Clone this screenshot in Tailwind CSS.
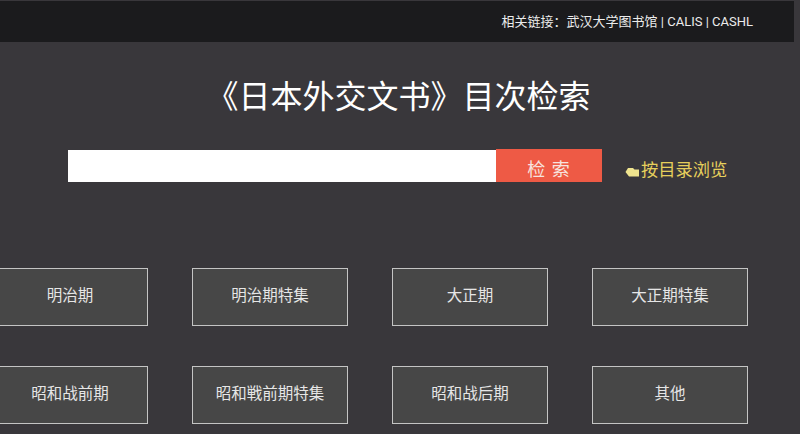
<!DOCTYPE html>
<html lang="zh-CN">
<head>
    <meta charset="UTF-8">
    <meta name="viewport" content="width=device-width, initial-scale=1.0">
    <title>《日本外交文书》目次检索</title>
    <script src="https://cdn.jsdelivr.net/npm/@tailwindcss/browser@4"></script>
</head>
<body class="bg-[#39373b] h-[434px] overflow-hidden font-['Roboto','Noto_Sans_CJK_SC',sans-serif]">

    <div class="w-[794px] h-[41px] mt-px bg-[#1b1b1d] flex items-center justify-end pr-[41px] text-[13px] text-[#ececec]">
        <span>相关链接：<a href="#">武汉大学图书馆</a> | <a href="#">CALIS</a> | <a href="#">CASHL</a></span>
    </div>

    <h1 class="mt-[33px] pr-[3px] text-center text-[32px] leading-[44px] font-normal text-white">《日本外交文书》目次检索</h1>

    <div class="mt-[30px] ml-[68px] flex items-center">
        <input type="text" class="w-[428px] h-[32px] bg-white border-0 outline-none">
        <button class="w-[106px] h-[33px] pt-2 bg-[#ee5a45] text-[18px] tracking-[1px] leading-none text-[#f7e3df]">检 索</button>
        <a href="#" class="ml-[23px] mt-[11px] flex items-center text-[17.25px] leading-none text-[#e6cf5c]">
            <svg class="w-[15px] h-[13px] mr-[1px]" viewBox="0 0 15 13">
                <path d="M0.5 7 L3 3 H8 L9.5 4.5 H14 V11.5 H4 Z" fill="#efe48f"/>
            </svg>
            按目录浏览
        </a>
    </div>

    <div class="mt-[86px] -ml-2 grid grid-cols-[repeat(4,156px)] gap-x-[44px] gap-y-[40px] text-[15.5px] text-[#e6e6e6]">
        <a href="#" class="h-[58px] flex items-center justify-center bg-[#474747] border border-[#c4c4c4]">明治期</a>
        <a href="#" class="h-[58px] flex items-center justify-center bg-[#474747] border border-[#c4c4c4]">明治期特集</a>
        <a href="#" class="h-[58px] flex items-center justify-center bg-[#474747] border border-[#c4c4c4]">大正期</a>
        <a href="#" class="h-[58px] flex items-center justify-center bg-[#474747] border border-[#c4c4c4]">大正期特集</a>
        <a href="#" class="h-[58px] flex items-center justify-center bg-[#474747] border border-[#c4c4c4]">昭和战前期</a>
        <a href="#" class="h-[58px] flex items-center justify-center bg-[#474747] border border-[#c4c4c4]">昭和戦前期特集</a>
        <a href="#" class="h-[58px] flex items-center justify-center bg-[#474747] border border-[#c4c4c4]">昭和战后期</a>
        <a href="#" class="h-[58px] flex items-center justify-center bg-[#474747] border border-[#c4c4c4]">其他</a>
    </div>

</body>
</html>
